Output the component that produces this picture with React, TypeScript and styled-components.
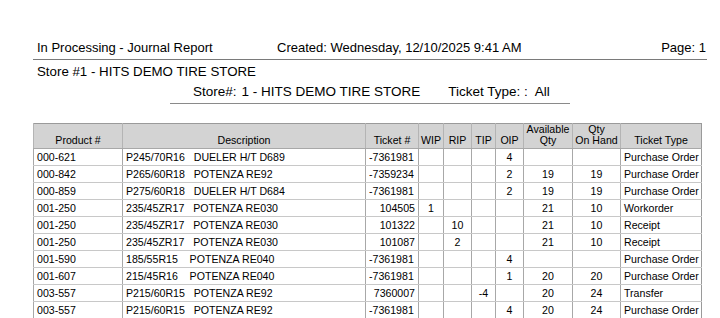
import React from "react";
import styled, { createGlobalStyle } from "styled-components";

type Align = "left" | "center" | "right";

interface IRow {
  product: string;
  description: string;
  ticket: string;
  wip?: string;
  rip?: string;
  tip?: string;
  oip?: string;
  available?: string;
  onHand?: string;
  ticketType: string;
}

const rows: IRow[] = [
  { product: "000-621", description: "P245/70R16   DUELER H/T D689", ticket: "-7361981", oip: "4", ticketType: "Purchase Order" },
  { product: "000-842", description: "P265/60R18   POTENZA RE92", ticket: "-7359234", oip: "2", available: "19", onHand: "19", ticketType: "Purchase Order" },
  { product: "000-859", description: "P275/60R18   DUELER H/T D684", ticket: "-7361981", oip: "2", available: "19", onHand: "19", ticketType: "Purchase Order" },
  { product: "001-250", description: "235/45ZR17   POTENZA RE030", ticket: "104505", wip: "1", available: "21", onHand: "10", ticketType: "Workorder" },
  { product: "001-250", description: "235/45ZR17   POTENZA RE030", ticket: "101322", rip: "10", available: "21", onHand: "10", ticketType: "Receipt" },
  { product: "001-250", description: "235/45ZR17   POTENZA RE030", ticket: "101087", rip: "2", available: "21", onHand: "10", ticketType: "Receipt" },
  { product: "001-590", description: "185/55R15    POTENZA RE040", ticket: "-7361981", oip: "4", ticketType: "Purchase Order" },
  { product: "001-607", description: "215/45R16    POTENZA RE040", ticket: "-7361981", oip: "1", available: "20", onHand: "20", ticketType: "Purchase Order" },
  { product: "003-557", description: "P215/60R15   POTENZA RE92", ticket: "7360007", tip: "-4", available: "20", onHand: "24", ticketType: "Transfer" },
  { product: "003-557", description: "P215/60R15   POTENZA RE92", ticket: "-7361981", oip: "4", available: "20", onHand: "24", ticketType: "Purchase Order" },
];

const columns = [
  { label: "Product #", width: 89 },
  { label: "Description", width: 243 },
  { label: "Ticket #", width: 53 },
  { label: "WIP", width: 25 },
  { label: "RIP", width: 28 },
  { label: "TIP", width: 24 },
  { label: "OIP", width: 28 },
  { label: "Available\nQty", width: 49 },
  { label: "Qty\nOn Hand", width: 48 },
  { label: "Ticket Type", width: 81 },
];

const App = () => {
  return (
    <>
      <GlobalStyle />
      <Page>
        <TitleRow>
          <span>In Processing - Journal Report</span>
          <span>Created: Wednesday, 12/10/2025 9:41 AM</span>
          <span>Page: 1</span>
        </TitleRow>
        <StoreLine>Store #1 - HITS DEMO TIRE STORE</StoreLine>
        <Criteria>
          <CriteriaItem>
            Store#:<CriteriaValue $gap={5}>1 - HITS DEMO TIRE STORE</CriteriaValue>
          </CriteriaItem>
          <CriteriaItem>
            Ticket Type: :<CriteriaValue $gap={7}>All</CriteriaValue>
          </CriteriaItem>
        </Criteria>

        <Table>
          <colgroup>
            {columns.map((c) => (
              <col key={c.label} style={{ width: c.width }} />
            ))}
          </colgroup>
          <thead>
            <tr>
              {columns.map((c) => (
                <HeadCell key={c.label}>{c.label}</HeadCell>
              ))}
            </tr>
          </thead>
          <tbody>
            {rows.map((r, i) => (
              <tr key={i}>
                <Cell>{r.product}</Cell>
                <Cell $pre>{r.description}</Cell>
                <Cell $align={r.ticket.startsWith("-") ? "left" : "right"}>{r.ticket}</Cell>
                <Cell $align="center">{r.wip}</Cell>
                <Cell $align="center">{r.rip}</Cell>
                <Cell $align="center">{r.tip}</Cell>
                <Cell $align="center">{r.oip}</Cell>
                <Cell $align="center">{r.available}</Cell>
                <Cell $align="center">{r.onHand}</Cell>
                <Cell>{r.ticketType}</Cell>
              </tr>
            ))}
          </tbody>
        </Table>
      </Page>
    </>
  );
};

export default App;

const GlobalStyle = createGlobalStyle`
  body {
    margin: 0;
    background: #ffffff;
    color: #000000;
    font-family: "Liberation Sans", Arial, sans-serif;
    overflow: hidden;
  }
`;

const Page = styled.div`
  padding: 40px 0 0 33px;
  width: 674px;
`;

const TitleRow = styled.div`
  display: grid;
  grid-template-columns: 240px 1fr auto;
  padding: 0 1px 4px 4px;
  font-size: 13px;
  line-height: 15px;
  border-bottom: 1px solid #7a7a7a;
`;

const StoreLine = styled.div`
  margin-top: 4px;
  padding-left: 4px;
  font-size: 13.3px;
  line-height: 15px;
`;

const Criteria = styled.div`
  display: flex;
  gap: 28px;
  width: 377px;
  margin: 5px 0 0 137px;
  padding: 0 0 4px 23px;
  font-size: 13.5px;
  line-height: 15px;
  border-bottom: 1px solid #8a8a8a;
`;

const CriteriaItem = styled.span`
  white-space: nowrap;
`;

const CriteriaValue = styled.span<{ $gap: number }>`
  margin-left: ${(p) => p.$gap}px;
`;

const Table = styled.table`
  margin-top: 19px;
  width: 668px;
  table-layout: fixed;
  border-collapse: collapse;
  border: 1px solid #9a9a9a;
  font-size: 10.6px;
  color: #000;
`;

const HeadCell = styled.th`
  height: 22px;
  padding: 0 1px 2px;
  background: #d3d3d3;
  border-left: 1px solid #b4b4b4;
  border-bottom: 1px solid #a8a8a8;
  font-weight: 400;
  line-height: 11px;
  text-align: center;
  vertical-align: bottom;
  white-space: pre-line;
`;

const Cell = styled.td<{ $align?: Align; $pre?: boolean }>`
  height: 16px;
  padding: 0 3px;
  border-left: 1px solid #a8a8a8;
  border-bottom: 1px solid #c8c8c8;
  line-height: 16px;
  text-align: ${(p) => p.$align || "left"};
  white-space: ${(p) => (p.$pre ? "pre" : "nowrap")};
  overflow: hidden;
`;
